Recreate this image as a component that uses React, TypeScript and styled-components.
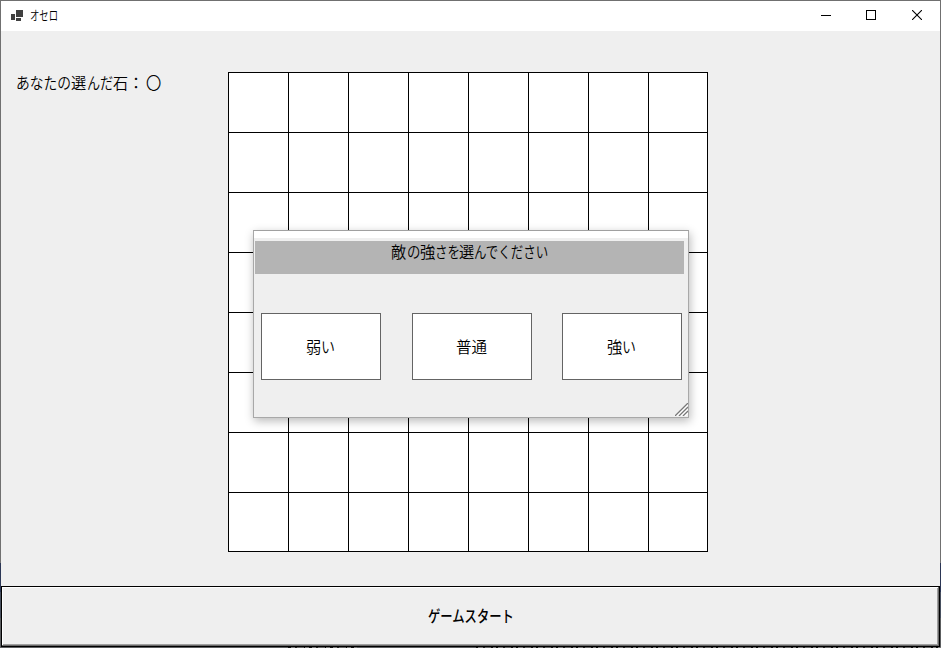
import React from 'react';
import styled, { createGlobalStyle } from 'styled-components';

const GlobalStyle = createGlobalStyle`
  * { box-sizing: border-box; }
  html, body { margin: 0; padding: 0; overflow: hidden; }
  body { font-family: "Noto Sans CJK JP", "Noto Sans", sans-serif; color: #000; }
`;

const Desktop = styled.div`
  width: 941px;
  height: 648px;
  padding: 1px;
  background:
    repeating-linear-gradient(90deg, #111 0 3px, #777 3px 7px, #222 7px 9px, #666 9px 16px, #111 16px 17px, #777 17px 21px) 288px 647px / 69px 1px no-repeat,
    repeating-linear-gradient(90deg, #111 0 2px, #777 2px 7px, #222 7px 9px, #666 9px 15px, #111 15px 17px, #777 17px 20px) 476px 647px / 465px 1px no-repeat,
    linear-gradient(180deg, #707070 0 563px, #2b3655 563px 592px, #48505f 592px 618px, #5c5e60 618px);
`;

const Window = styled.div`
  width: 939px;
  height: 646px;
  display: flex;
  flex-direction: column;
  background: #efefef;
`;

const TitleBar = styled.header`
  height: 30px;
  flex: none;
  display: flex;
  align-items: center;
  padding-left: 10px;
  background: #fff;
`;

const Title = styled.div`
  padding-bottom: 3px;
`;

const AppIcon = styled.svg`
  width: 12px;
  height: 12px;
  margin: 0 7px 1px 0;
`;

const Controls = styled.div`
  margin-left: auto;
  display: flex;
  height: 30px;
`;

const ControlButton = styled.button<{ $width: number }>`
  width: ${p => p.$width}px;
  height: 30px;
  padding: 9px 0 0;
  border: 0;
  background: transparent;
  display: flex;
  justify-content: center;
`;

const Content = styled.main`
  height: 555px;
  flex: none;
  display: flex;
  align-items: flex-start;
`;

const Side = styled.div`
  width: 227px;
  padding: 40px 0 0 15px;
`;

const Line = styled.div<{ $size: number; $bold?: boolean }>`
  display: flex;
  align-items: center;
  height: ${p => p.$size + 6}px;
  line-height: ${p => p.$size + 6}px;
  font-size: ${p => p.$size}px;
  font-weight: ${p => (p.$bold ? 500 : 350)};
  white-space: nowrap;
`;

const Segment = styled.span<{ $width: number; $scale: number }>`
  width: ${p => p.$width}px;
  flex: none;
  transform: scaleX(${p => p.$scale});
  transform-origin: 0 50%;
`;

const Board = styled.div`
  margin-top: 41px;
  width: 480px;
  height: 480px;
  display: grid;
  grid-template-columns: repeat(7, 60px) 59px;
  grid-template-rows: repeat(7, 60px) 59px;
  background: #fff;
  border-right: 1px solid #000;
  border-bottom: 1px solid #000;
`;

const Cell = styled.div`
  border-left: 1px solid #000;
  border-top: 1px solid #000;
`;

const StartButton = styled.button`
  width: 939px;
  height: 61px;
  flex: none;
  padding: 0 0 4px 1px;
  border: 1px solid #000;
  background: #efefef;
  box-shadow: inset -1px -1px #696969, inset 1px 1px #fff, inset -2px -2px #a0a0a0;
  display: flex;
  align-items: center;
  justify-content: center;
  font-family: inherit;
  color: #000;
`;

const Dialog = styled.section`
  position: absolute;
  left: 253px;
  top: 230px;
  width: 436px;
  height: 188px;
  border: 1px solid #a8a8a8;
  border-top-color: #a0a0a0;
  background: #efefef;
  box-shadow: 1px 3px 9px rgba(0, 0, 0, 0.28);
`;

const DialogCaption = styled.div`
  height: 7px;
  background: #fff;
`;

const Prompt = styled.div`
  width: 429px;
  height: 33px;
  margin: 3px 0 0 1px;
  background: #b4b4b4;
  display: flex;
  align-items: center;
  justify-content: center;
  padding-bottom: 13px;
`;

const Choices = styled.div`
  display: grid;
  grid-template-columns: repeat(3, 120px);
  column-gap: 30.5px;
  margin: 39px 0 0 7px;
`;

const Choice = styled.button`
  height: 67px;
  padding: 0 1px 2px 0;
  border: 1px solid #646464;
  background: #fff;
  display: flex;
  align-items: center;
  justify-content: center;
  font-family: inherit;
  color: #000;
`;

const Grip = styled.svg`
  position: absolute;
  right: 0;
  bottom: 1px;
  width: 13px;
  height: 13px;
`;

type Part = [text: string, width: number, scale: number];

function Label({ parts, size = 16, bold }: { parts: Part[]; size?: number; bold?: boolean }) {
  return (
    <Line $size={size} $bold={bold}>
      {parts.map(([text, width, scale], i) => (
        <Segment key={i} $width={width} $scale={scale}>{text}</Segment>
      ))}
    </Line>
  );
}

const choices: Part[][] = [
  [['弱', 15, 0.95], ['い', 14, 0.87]],
  [['普通', 30, 0.97]],
  [['強', 15, 0.95], ['い', 14, 0.87]],
];

export default function App() {
  return (
    <>
      <GlobalStyle />
      <Desktop>
        <Window>
          <TitleBar>
            <AppIcon viewBox="0 0 12 12" fill="#404040" shapeRendering="crispEdges">
              <path d="M5 0h7v7H5zM0 4h4v6H0zM5 8h5v3H5z" />
            </AppIcon>
            <Title>
              <Label size={13} parts={[['オセロ', 28, 0.72]]} />
            </Title>
            <Controls>
              <ControlButton aria-label="最小化" $width={44}>
                <svg width="10" height="10" shapeRendering="crispEdges"><path d="M0 5h10v1H0z" /></svg>
              </ControlButton>
              <ControlButton aria-label="最大化" $width={46}>
                <svg width="10" height="10" shapeRendering="crispEdges"><path d="M.5.5h9v9h-9z" fill="none" stroke="#000" /></svg>
              </ControlButton>
              <ControlButton aria-label="閉じる" $width={46}>
                <svg width="10" height="10"><path d="M0 0l10 10M10 0L0 10" fill="none" stroke="#000" strokeWidth="1.1" /></svg>
              </ControlButton>
            </Controls>
          </TitleBar>
          <Content>
            <Side>
              <Label parts={[['あなたの', 55, 0.86], ['選', 16, 0.95], ['んだ', 26, 0.82], ['石', 15, 0.94], ['：', 18, 1], ['〇', 16, 0.95]]} />
            </Side>
            <Board>
              {Array.from({ length: 64 }, (_, i) => <Cell key={i} />)}
            </Board>
          </Content>
          <StartButton>
            <Label bold parts={[['ゲームスタート', 86, 0.77]]} />
          </StartButton>
        </Window>
        <Dialog>
          <DialogCaption />
          <Prompt>
            <Label parts={[['敵', 16, 0.95], ['の', 13, 0.84], ['強', 15, 0.95], ['さを', 24, 0.78], ['選', 15, 0.95], ['んでください', 74, 0.78]]} />
          </Prompt>
          <Choices>
            {choices.map((parts, i) => (
              <Choice key={i}><Label parts={parts} /></Choice>
            ))}
          </Choices>
          <Grip viewBox="0 0 13 13" fill="none">
            <path d="M1 13L13 1M5 13L13 5M9 13L13 9" stroke="#fff" strokeWidth="2.4" />
            <path d="M0 13L13 0M4 13L13 4M8 13L13 8" stroke="#777" strokeWidth="1.3" />
          </Grip>
        </Dialog>
      </Desktop>
    </>
  );
}
